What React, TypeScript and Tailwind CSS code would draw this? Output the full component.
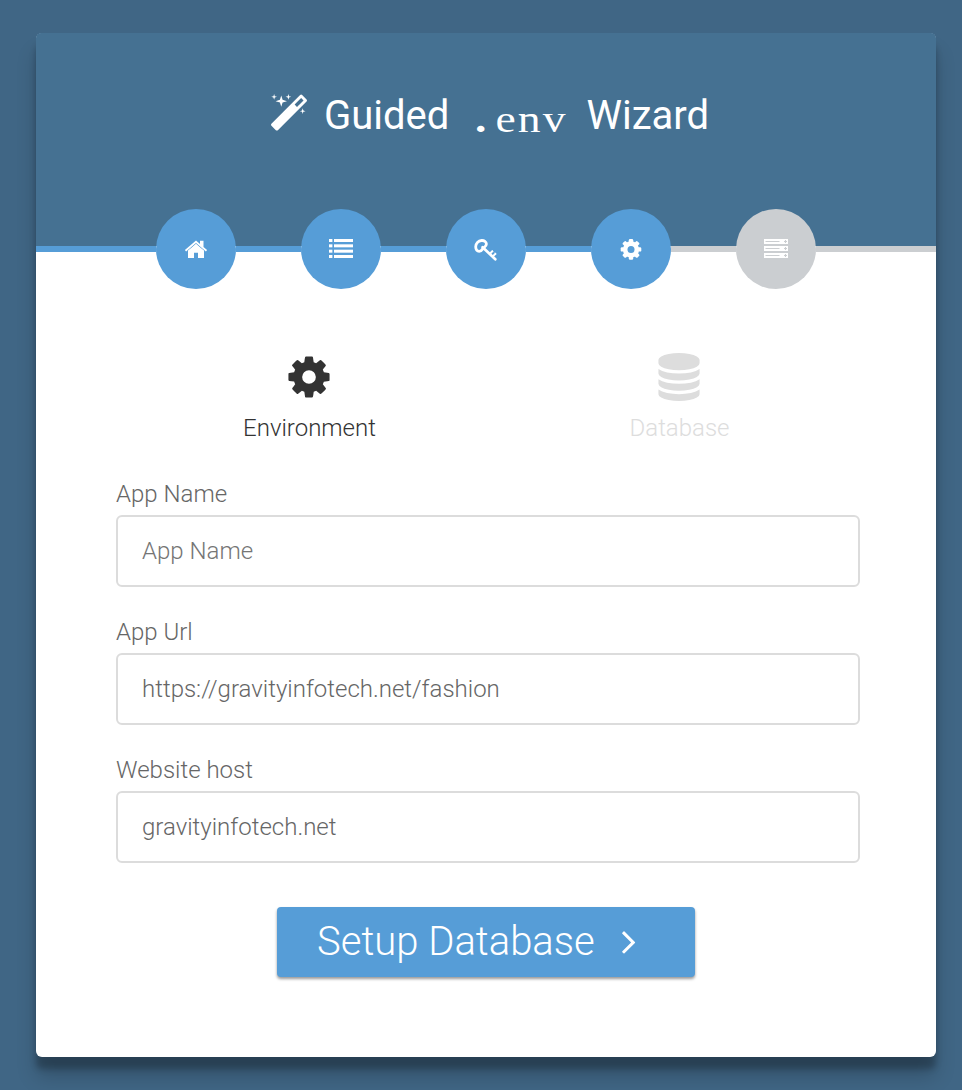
import React from "react";

type IconProps = { className?: string };

const COG_PATH =
  "M1152 896q0-106-75-181t-181-75-181 75-75 181 75 181 181 75 181-75 75-181zm512-109v222q0 12-8 23t-20 13l-185 28q-19 54-39 91 35 50 107 138 10 12 10 25t-9 23q-27 37-99 108t-94 71q-12 0-26-9l-138-108q-44 23-91 38-16 136-29 186-7 28-36 28h-222q-14 0-24.5-8.5t-11.5-21.5l-28-184q-49-16-90-37l-141 107q-10 9-25 9-14 0-25-11-126-114-165-168-7-10-7-23 0-12 8-23 15-21 51-66.5t54-70.5q-27-50-41-99l-183-27q-13-2-21-12.5t-8-23.5v-222q0-12 8-23t19-13l186-28q14-46 39-92-40-57-107-138-10-12-10-24 0-10 9-23 26-36 98.5-107.5t94.5-71.5q13 0 26 10l138 107q44-23 91-38 16-136 29-186 7-28 36-28h222q14 0 24.5 8.5t11.5 21.5l28 184q49 16 90 37l142-107q9-9 24-9 13 0 25 10 129 119 165 170 7 8 7 22 0 12-8 23-15 21-51 66.5t-54 70.5q26 50 41 98l183 28q13 2 21 12.5t8 23.5z";

const DATABASE_PATH =
  "M896 768q237 0 443-43t325-127v170q0 69-103 128t-280 93.5-385 34.5-385-34.5-280-93.5-103-128v-170q119 84 325 127t443 43zm0 768q237 0 443-43t325-127v170q0 69-103 128t-280 93.5-385 34.5-385-34.5-280-93.5-103-128v-170q119 84 325 127t443 43zm0-384q237 0 443-43t325-127v170q0 69-103 128t-280 93.5-385 34.5-385-34.5-280-93.5-103-128v-170q119 84 325 127t443 43zm0-1152q208 0 385 34.5t280 93.5 103 128v128q0 69-103 128t-280 93.5-385 34.5-385-34.5-280-93.5-103-128v-128q0-69 103-128t280-93.5 385-34.5z";

const MAGIC_PATH =
  "M1254 581l293-293-107-107-293 293zM1701 288q0 27-18 45l-1286 1286q-18 18-45 18t-45-18l-198-198q-18-18-18-45t18-45l1286-1286q18-18 45-18t45 18l198 198q18 18 18 45zM259 98l98 30-98 30-30 98-30-98-98-30 98-30 30-98zM609 260l196 60-196 60-60 196-60-196-196-60 196-60 60-196zM1539 738l98 30-98 30-30 98-30-98-98-30 98-30 30-98zM899 98l98 30-98 30-30 98-30-98-98-30 98-30 30-98z";

const ANGLE_PATH =
  "M1171 960q0 13-10 23l-466 466q-10 10-23 10t-23-10l-50-50q-10-10-10-23t10-23l393-393-393-393q-10-10-10-23t10-23l50-50q10-10 23-10t23 10l466 466q10 10 10 23z";

function Glyph({ d, className }: IconProps & { d: string }) {
  return (
    <svg viewBox="0 0 1792 1792" fill="currentColor" fillRule="evenodd" className={className}>
      <path d={d} />
    </svg>
  );
}

function HomeIcon() {
  return (
    <svg viewBox="0 0 24 24" className="size-6" fill="currentColor">
      <path d="M12 6.8 20 13.6V21h-6v-5.3h-4V21H4v-7.4z" />
      <path
        d="M1.9 14.6 12 6l10.1 8.6"
        fill="none"
        stroke="#569dd7"
        strokeWidth="1"
      />
      <path d="M12 3.6 16 7V3.8h3.5V10l3.6 3.1-1.2 1.4L12 6 2.1 14.5.9 13.1z" />
    </svg>
  );
}

function ListIcon() {
  return (
    <svg viewBox="0 0 24 24" className="size-6" fill="currentColor">
      {[2, 7.33, 12.67, 18].map((y) => (
        <g key={y}>
          <rect x="0" y={y} width="3.4" height="3" />
          <rect x="5" y={y} width="19" height="3" />
        </g>
      ))}
    </svg>
  );
}

function KeyIcon() {
  return (
    <svg viewBox="0 0 24 24" className="-ml-px size-6 overflow-visible" fill="none" stroke="currentColor" strokeLinejoin="round">
      <path
        d="M9.2 11.2C10.2 10.1 12.4 9.7 12.4 7.1c0-2.5-2.3-3.8-4.8-3.6C4.3 3.8 1.8 6.4 1.7 9.8c0 2.6 1.4 4.5 3.5 4.5 2.5 0 3-2 4-3.1z"
        strokeWidth="2.8"
      />
      <path d="m8.6 10.2 12.7 12" strokeWidth="2.7" strokeLinecap="round" />
      <path d="m15.4 17.2 3.4-3.4M18.6 19.6l3.4-3.4" strokeWidth="2" />
      <path d="m18.2 13.6 3.6 3.2" strokeWidth="1" strokeDasharray="1.4 2" />
    </svg>
  );
}

function GearIcon() {
  return (
    <svg viewBox="0 0 24 24" className="size-6" fill="currentColor">
      {[0, 45, 90, 135].map((a) => (
        <rect key={a} x="9.8" y="2.1" width="4.4" height="20.6" rx="1.2" transform={`rotate(${a} 12 12.4)`} />
      ))}
      <circle cx="12" cy="12.4" r="8.1" />
      <circle cx="12" cy="12.4" r="3.5" fill="#569dd7" />
    </svg>
  );
}

function ServerIcon() {
  return (
    <svg viewBox="0 0 24 24" className="size-6" fill="currentColor">
      {[2, 9, 16].map((y) => (
        <g key={y}>
          <rect x="0" y={y} width="24" height="5" />
          <path d={`M1.5 ${y + 2.5}h14M20 ${y + 2.5}h3M21.5 ${y + 1}v3`} stroke="#cbced1" strokeWidth="1.1" />
        </g>
      ))}
    </svg>
  );
}

const steps = [
  { name: "home", icon: <HomeIcon />, done: true },
  { name: "requirements", icon: <ListIcon />, done: true },
  { name: "permissions", icon: <KeyIcon />, done: true },
  { name: "environment", icon: <GearIcon />, done: true },
  { name: "finished", icon: <ServerIcon />, done: false },
];

function Steps() {
  return (
    <div className="-mt-[37px] flex h-20 items-center text-white">
      <div className="h-1.5 flex-1 bg-[#569dd7]" />
      {steps.map((s, i) => (
        <React.Fragment key={s.name}>
          {i > 0 && <div className={s.done ? "h-1.5 w-[65px] bg-[#569dd7]" : "h-1.5 w-[65px] bg-[#cbced1]"} />}
          <div
            className={
              s.done
                ? "flex size-20 items-center justify-center rounded-full bg-[#569dd7]"
                : "flex size-20 items-center justify-center rounded-full bg-[#cbced1]"
            }
          >
            {s.icon}
          </div>
        </React.Fragment>
      ))}
      <div className="h-1.5 flex-1 bg-[#cbced1]" />
    </div>
  );
}

function Field({ label, value, placeholder }: { label: string; value?: string; placeholder?: string }) {
  return (
    <label className="mb-[30px] block text-[24px] text-[#666]">
      <span className="block pb-1.5 leading-[30px]">{label}</span>
      <input
        className="block h-[72px] w-full rounded-md border-2 border-[#dcdcdc] bg-white px-6 font-light text-[#666] outline-none placeholder:text-[#757575]"
        defaultValue={value}
        placeholder={placeholder}
      />
    </label>
  );
}

export default function App() {
  return (
    <div className="h-[1090px] w-[962px] overflow-hidden bg-[#406685] px-9 pr-[26px] pt-[33px] font-[Roboto,sans-serif] font-light">
      <div className="h-[1024px] w-[900px] rounded-md bg-white shadow-[0_20px_20px_rgba(0,0,0,0.19),0_12px_6px_rgba(0,0,0,0.23)]">
        <header className="h-[213px] rounded-t-[5px] bg-[#457192] pt-[53px] text-white">
          <h1 className="flex h-[60px] items-center pl-[233px] text-[40px] leading-[60px] font-normal">
            <Glyph d={MAGIC_PATH} className="-mt-1 size-10" />
            <span className="ml-[15px] w-[151px]">Guided</span>
            <span className="mt-1.5 w-[111.5px] origin-left scale-x-[1.2] font-['Liberation_Serif',serif] text-[38px] tracking-[1.8px]">
              <span className="font-bold tracking-[7.5px]">.</span>env
            </span>
            <span>Wizard</span>
          </h1>
        </header>
        <Steps />
        <main className="px-20 pt-16">
          <div className="flex w-[741px] text-[24px] leading-9">
            <div className="flex w-[387px] flex-col items-center text-[#333]">
              <Glyph d={COG_PATH} className="mr-px size-12" />
              <span className="mt-[9px]">Environment</span>
            </div>
            <div className="flex w-[353px] flex-col items-center text-[#ddd]">
              <Glyph d={DATABASE_PATH} className="mr-px size-12" />
              <span className="mt-[9px]">Database</span>
            </div>
          </div>
          <form className="mt-[33px] w-[744px]" onSubmit={(e) => e.preventDefault()}>
            <Field label="App Name" placeholder="App Name" />
            <Field label="App Url" value="https://gravityinfotech.net/fashion" />
            <Field label="Website host" value="gravityinfotech.net" />
            <button className="mt-[44px] ml-[161px] flex h-[70px] w-[418px] items-center rounded bg-[#569dd7] pl-10 text-[40px] font-light text-white shadow-[0_2px_3px_rgba(0,0,0,0.4)]">
              <span>Setup Database</span>
              <Glyph d={ANGLE_PATH} className="-mt-0.5 ml-[14px] size-10" />
            </button>
          </form>
        </main>
      </div>
    </div>
  );
}
